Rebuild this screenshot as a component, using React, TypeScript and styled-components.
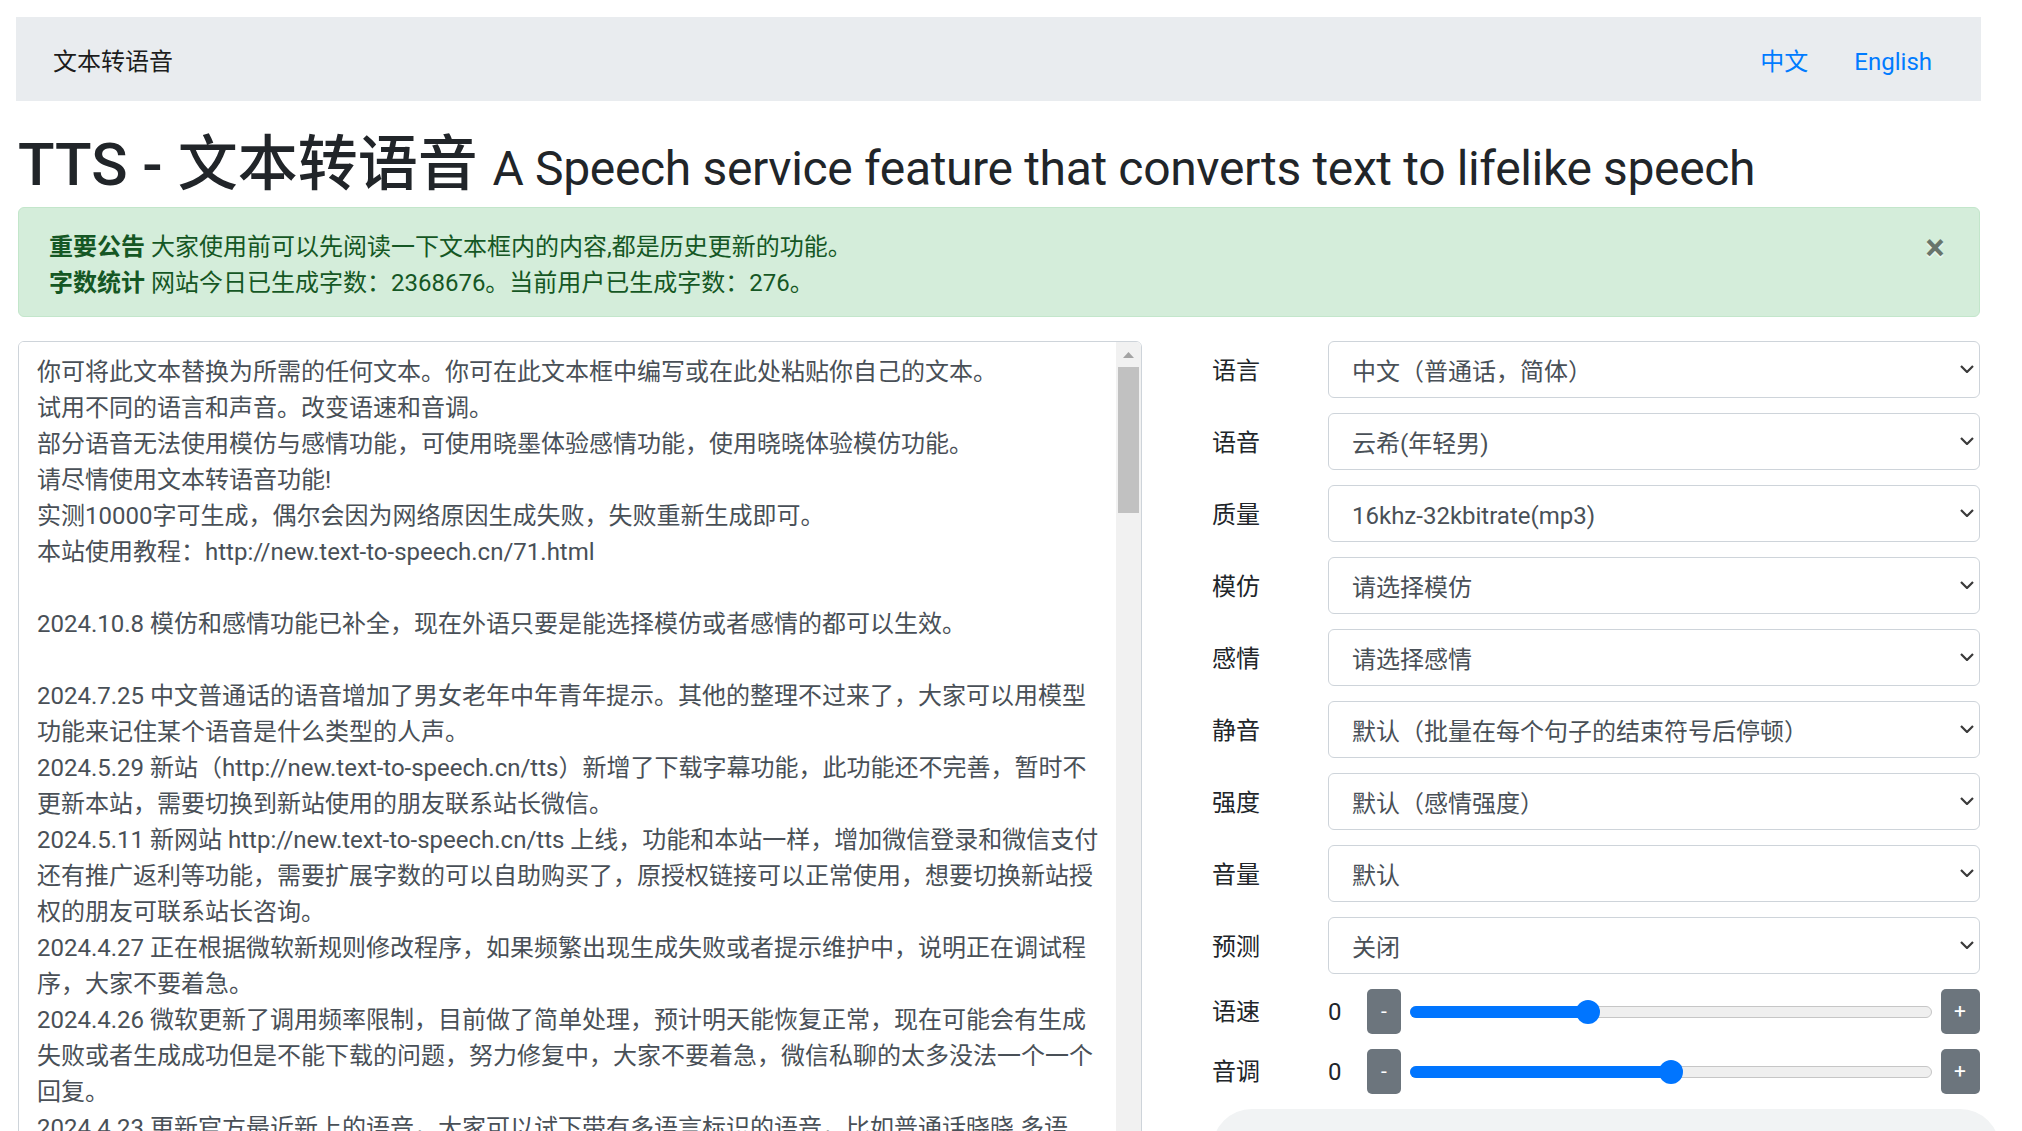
import { useState } from "react";
import styled, { createGlobalStyle } from "styled-components";

const GlobalStyle = createGlobalStyle`
  html, body {
    margin: 0;
    padding: 0;
    overflow: hidden;
    background: #fff;
  }
  body {
    font-family: Roboto, "Noto Sans CJK SC", sans-serif;
    font-size: 24px;
    line-height: 36px;
    color: #212529;
  }
  * {
    box-sizing: border-box;
  }
`;

const Page = styled.div`
  width: 1979.5px;
  padding: 17px 0 0 18px;
`;

const NavBar = styled.nav`
  height: 84px;
  margin: 0 -1.5px 0 -2px;
  padding: 5px 49px 0 37px;
  display: flex;
  align-items: center;
  justify-content: space-between;
  background: #e9ecef;
`;

const Brand = styled.span`
  font-size: 24px;
  color: rgba(0, 0, 0, 0.9);
`;

const NavLinks = styled.div`
  display: flex;
  gap: 46px;
`;

const NavLink = styled.a`
  font-size: 24px;
  color: #007bff;
  text-decoration: none;
`;

const Title = styled.h1`
  margin: 28px 0 6px;
  font-size: 60px;
  line-height: 72px;
  font-weight: 500;
  white-space: nowrap;
`;

const Subtitle = styled.small`
  font-size: 48px;
  line-height: 1;
  font-weight: 400;
  letter-spacing: -0.35px;
`;

const Alert = styled.div`
  position: relative;
  height: 110px;
  padding: 20.5px 30px 15.5px;
  border: 1.5px solid #c3e6cb;
  border-radius: 6px;
  background: #d4edda;
  color: #155724;
  line-height: 36px;
`;

const CloseButton = styled.button`
  position: absolute;
  top: 0;
  right: 0;
  padding: 22px 34px 14px 30px;
  border: 0;
  background: transparent;
  font-family: Roboto, sans-serif;
  font-size: 36px;
  font-weight: 700;
  line-height: 1;
  color: #000;
  opacity: 0.5;
  text-shadow: 0 1.5px 0 #fff;
  cursor: pointer;
`;

const Main = styled.div`
  display: grid;
  grid-template-columns: 1124px minmax(0, 1fr);
  column-gap: 70px;
  margin-top: 24px;
`;

const TextBox = styled.div`
  position: relative;
  height: 1000px;
  border: 1.5px solid #ced4da;
  border-radius: 6px;
  overflow: hidden;
`;

const TextArea = styled.textarea`
  display: block;
  width: 100%;
  height: 100%;
  padding: 11.5px 43px 9px 18px;
  border: 0;
  outline: none;
  resize: none;
  overflow: hidden;
  white-space: pre;
  font: inherit;
  font-size: 24px;
  line-height: 36px;
  color: #495057;
  background: #fff;
`;

const ScrollTrack = styled.div`
  position: absolute;
  top: 0;
  right: 0;
  bottom: 0;
  width: 25px;
  background: #f1f1f1;
`;

const ScrollArrow = styled.div`
  height: 25px;
  display: flex;
  align-items: center;
  justify-content: center;
`;

const ScrollThumb = styled.div`
  height: 146px;
  margin: 0 2px;
  background: #c1c1c1;
`;

const Settings = styled.div`
  display: flex;
  flex-direction: column;
  gap: 15px;
`;

const FieldRow = styled.div`
  display: grid;
  grid-template-columns: 116px 1fr;
  align-items: center;
`;

const Label = styled.label<{ $shift?: number }>`
  padding-top: ${(p) => p.$shift ?? 0}px;
  font-size: 24px;
  color: #212529;
`;

const SelectWrap = styled.div`
  position: relative;
`;

const Select = styled.select`
  display: block;
  width: 100%;
  height: 57px;
  padding: 4px 44px 0 23px;
  border: 1.5px solid #ced4da;
  border-radius: 6px;
  appearance: none;
  background: #fff;
  font: inherit;
  font-size: 24px;
  color: #495057;
  outline: none;
`;

const Chevron = styled.svg`
  position: absolute;
  top: 50%;
  right: 6px;
  width: 14px;
  height: 8px;
  margin-top: -5px;
  pointer-events: none;
`;

const SliderRow = styled.div`
  display: grid;
  grid-template-columns: 116px 39px 34px 1fr 39px;
  align-items: center;
  height: 45px;
`;

const Value = styled.span`
  font-size: 24px;
  color: #212529;
`;

const StepButton = styled.button`
  height: 45px;
  padding: 0;
  border: 0;
  border-radius: 5px;
  background: #6c757d;
  color: #fff;
  font-family: Roboto, sans-serif;
  font-size: 21px;
  line-height: 1;
`;

const Track = styled.div`
  position: relative;
  height: 12px;
  margin: 0 9px;
  border: 1px solid #c6c6c6;
  border-radius: 6px;
  background: #efefef;
`;

const Fill = styled.div`
  position: absolute;
  left: -1px;
  top: -1px;
  bottom: -1px;
  border-radius: 6px;
  background: #0075ff;
`;

const Thumb = styled.div`
  position: absolute;
  top: 50%;
  width: 24px;
  height: 24px;
  border-radius: 50%;
  background: #0075ff;
  transform: translate(-50%, -50%);
`;

const AudioBar = styled.div`
  width: 788px;
  height: 81px;
  margin-top: 0;
  border-radius: 40px;
  background: #f1f3f4;
`;

const textLines = [
  "你可将此文本替换为所需的任何文本。你可在此文本框中编写或在此处粘贴你自己的文本。",
  "试用不同的语言和声音。改变语速和音调。",
  "部分语音无法使用模仿与感情功能，可使用晓墨体验感情功能，使用晓晓体验模仿功能。",
  "请尽情使用文本转语音功能!",
  "实测10000字可生成，偶尔会因为网络原因生成失败，失败重新生成即可。",
  "本站使用教程：http://new.text-to-speech.cn/71.html",
  "",
  "2024.10.8 模仿和感情功能已补全，现在外语只要是能选择模仿或者感情的都可以生效。",
  "",
  "2024.7.25 中文普通话的语音增加了男女老年中年青年提示。其他的整理不过来了，大家可以用模型",
  "功能来记住某个语音是什么类型的人声。",
  "2024.5.29 新站（http://new.text-to-speech.cn/tts）新增了下载字幕功能，此功能还不完善，暂时不",
  "更新本站，需要切换到新站使用的朋友联系站长微信。",
  "2024.5.11 新网站 http://new.text-to-speech.cn/tts 上线，功能和本站一样，增加微信登录和微信支付",
  "还有推广返利等功能，需要扩展字数的可以自助购买了，原授权链接可以正常使用，想要切换新站授",
  "权的朋友可联系站长咨询。",
  "2024.4.27 正在根据微软新规则修改程序，如果频繁出现生成失败或者提示维护中，说明正在调试程",
  "序，大家不要着急。",
  "2024.4.26 微软更新了调用频率限制，目前做了简单处理，预计明天能恢复正常，现在可能会有生成",
  "失败或者生成成功但是不能下载的问题，努力修复中，大家不要着急，微信私聊的太多没法一个一个",
  "回复。",
  "2024.4.23 更新官方最近新上的语音，大家可以试下带有多语言标识的语音，比如普通话晓晓 多语",
  "言版本。",
];

const selects = [
  { label: "语言", value: "中文（普通话，简体）" },
  { label: "语音", value: "云希(年轻男)" },
  { label: "质量", value: "16khz-32kbitrate(mp3)" },
  { label: "模仿", value: "请选择模仿" },
  { label: "感情", value: "请选择感情" },
  { label: "静音", value: "默认（批量在每个句子的结束符号后停顿）" },
  { label: "强度", value: "默认（感情强度）" },
  { label: "音量", value: "默认" },
  { label: "预测", value: "关闭" },
];

interface SliderProps {
  label: string;
  value: number;
  min: number;
  max: number;
}

const Slider = ({ label, value, min, max }: SliderProps) => {
  const f = (value - min) / (max - min);
  const pos = `calc(12px + (100% - 24px) * ${f})`;
  return (
    <SliderRow>
      <Label>{label}</Label>
      <Value>{value}</Value>
      <StepButton>-</StepButton>
      <Track>
        <Fill style={{ width: pos }} />
        <Thumb style={{ left: pos }} />
      </Track>
      <StepButton>+</StepButton>
    </SliderRow>
  );
};

export default function App() {
  const [text, setText] = useState(textLines.join("\n"));
  return (
    <Page>
      <GlobalStyle />
      <NavBar>
        <Brand>文本转语音</Brand>
        <NavLinks>
          <NavLink href="#">中文</NavLink>
          <NavLink href="#">English</NavLink>
        </NavLinks>
      </NavBar>
      <Title>
        TTS - 文本转语音 <Subtitle>A Speech service feature that converts text to lifelike speech</Subtitle>
      </Title>
      <Alert>
        <div>
          <strong>重要公告</strong> 大家使用前可以先阅读一下文本框内的内容,都是历史更新的功能。
        </div>
        <div>
          <strong>字数统计</strong> 网站今日已生成字数：2368676。当前用户已生成字数：276。
        </div>
        <CloseButton aria-label="Close">×</CloseButton>
      </Alert>
      <Main>
        <TextBox>
          <TextArea value={text} onChange={(e) => setText(e.target.value)} wrap="off" />
          <ScrollTrack>
            <ScrollArrow>
              <svg width="11" height="6" viewBox="0 0 11 6">
                <polygon points="0,6 5.5,0 11,6" fill="#a3a3a3" />
              </svg>
            </ScrollArrow>
            <ScrollThumb />
          </ScrollTrack>
        </TextBox>
        <Settings>
          {selects.map((s) => (
            <FieldRow key={s.label}>
              <Label $shift={3}>{s.label}</Label>
              <SelectWrap>
                <Select defaultValue={s.value}>
                  <option>{s.value}</option>
                </Select>
                <Chevron viewBox="0 0 14 8">
                  <polyline points="1,1 7,7 13,1" fill="none" stroke="#3a3a3a" strokeWidth="2.2" />
                </Chevron>
              </SelectWrap>
            </FieldRow>
          ))}
          <Slider label="语速" value={0} min={-100} max={200} />
          <Slider label="音调" value={0} min={-50} max={50} />
          <AudioBar />
        </Settings>
      </Main>
    </Page>
  );
}
